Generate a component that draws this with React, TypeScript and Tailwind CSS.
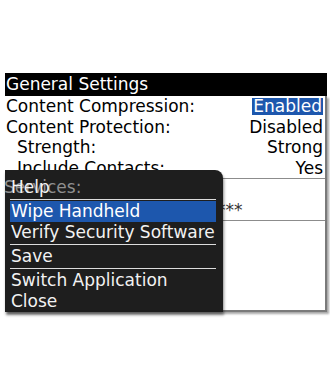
const font = { fontFamily: '"DejaVu Sans", "Noto Sans", sans-serif' };

const rows = [
  { label: "Content Compression:", value: "Enabled", indent: false, active: true },
  { label: "Content Protection:", value: "Disabled", indent: false, active: false },
  { label: "Strength:", value: "Strong", indent: true, active: false },
  { label: "Include Contacts:", value: "Yes", indent: true, active: false },
];

const Separator = () => <div className="h-px bg-[#dcdcdc] my-[1px]" />;

const MenuItem = ({ text, active }: { text: string; active?: boolean }) => (
  <div
    className={
      "h-[21px] leading-[21px] pl-[1px] whitespace-nowrap " +
      (active ? "bg-[#1d57ad] text-white" : "text-[#f2f2f2]")
    }
  >
    {text}
  </div>
);

export default function App() {
  return (
    <div className="w-[330px] h-[385px] bg-white overflow-hidden pt-[73px] pl-[5px]" style={font}>
      <div className="relative w-[322px] text-[17px] text-black">
        <div className="h-[23px] leading-[23px] bg-black text-white pl-[1px]">General Settings</div>

        <div className="h-[216px] border-r-2 border-b-2 border-[#7a7a7a] shadow-[2px_2px_2px_rgba(0,0,0,0.35)]">
          {rows.map((r) => (
            <div key={r.label} className="h-[20.5px] leading-[20.5px] flex justify-between pr-[2px]">
              <span className={r.indent ? "pl-[12px]" : "pl-[1px]"}>{r.label}</span>
              {r.active ? (
                <span className="self-center bg-[#1d57ad] text-white leading-[17px] px-[1px]">{r.value}</span>
              ) : (
                <span>{r.value}</span>
              )}
            </div>
          ))}

          <div className="border-t border-b border-[#8c8c8c]">
            <div className="h-[20.5px] leading-[20.5px] pl-[1px]">Services:</div>
            <div className="h-[20.5px] leading-[20.5px] pl-[195px] text-[#333]">*****</div>
          </div>
        </div>

        {/* options menu */}
        <div className="absolute left-0 top-[97px] w-[218px] h-[142px] bg-[#1e1e1e] rounded-tr-[8px] pt-[7px] pb-[3px] pl-[5px] pr-[7px] shadow-[1px_3px_3px_rgba(0,0,0,0.45)]">
          <div className="relative">
            <span className="absolute left-[-6px] top-0 h-[21px] leading-[21px] text-[#8f8f8f]">Services:</span>
            <div className="relative">
              <MenuItem text="Help" />
            </div>
          </div>
          <Separator />
          <MenuItem text="Wipe Handheld" active />
          <MenuItem text="Verify Security Software" />
          <Separator />
          <MenuItem text="Save" />
          <Separator />
          <MenuItem text="Switch Application" />
          <MenuItem text="Close" />
        </div>
      </div>
    </div>
  );
}
